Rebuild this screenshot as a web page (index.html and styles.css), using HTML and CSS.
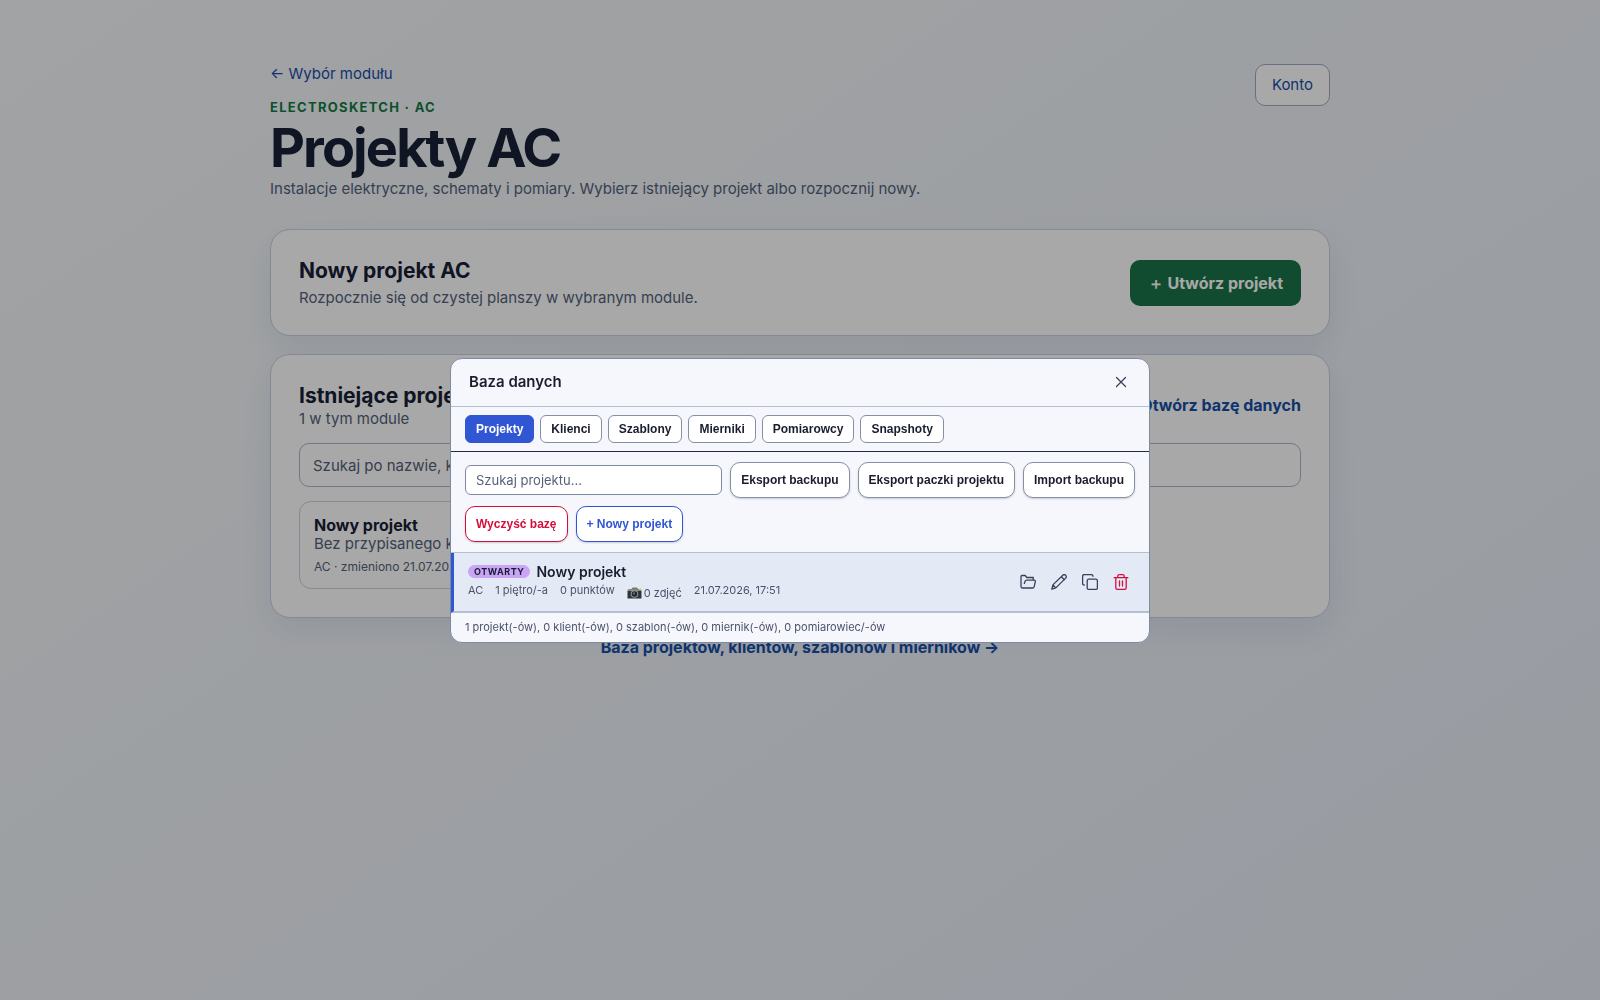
FILE: index.html
```html
<!DOCTYPE html>
<html lang="pl">
<head>
	<meta charset="UTF-8">
	<meta name="viewport" content="width=device-width, initial-scale=1">
	<title>Projekty AC</title>
	<link rel="stylesheet" href="styles.css">
</head>
<body>
<main class="page">
	<header class="page-header">
		<div>
			<a class="back" href="#">← Wybór modułu</a>
			<p class="eyebrow">ELECTROSKETCH · AC</p>
			<h1>Projekty AC</h1>
			<p class="muted">Instalacje elektryczne, schematy i pomiary. Wybierz istniejący projekt albo rozpocznij nowy.</p>
		</div>
		<a class="account" href="#">Konto</a>
	</header>

	<section class="card card-new">
		<div>
			<h2>Nowy projekt AC</h2>
			<p class="muted">Rozpocznie się od czystej planszy w wybranym module.</p>
		</div>
		<button class="create" type="button">＋ Utwórz projekt</button>
	</section>

	<section class="card">
		<div class="card-head">
			<div>
				<h2>Istniejące projekty</h2>
				<p class="muted">1 w tym module</p>
			</div>
			<a class="strong-link" href="#">Otwórz bazę danych</a>
		</div>
		<input class="search" type="search" aria-label="Szukaj projektu" placeholder="Szukaj po nazwie, kliencie lub adresie">
		<a class="project" href="#">
			<strong>Nowy projekt</strong>
			<span>Bez przypisanego klienta</span>
			<small>AC · zmieniono 21.07.2026, 17:51</small>
		</a>
	</section>

	<a class="strong-link base-link" href="#">Baza projektów, klientów, szablonów i mierników →</a>
</main>

<!-- okno bazy danych -->
<div class="overlay">
	<div class="modal" role="dialog" aria-modal="true" aria-labelledby="modal-title">
		<div class="modal-head">
			<h3 id="modal-title">Baza danych</h3>
			<button class="icon-btn" type="button" aria-label="Zamknij">
				<svg width="16" height="16" viewBox="0 0 16 16"><path d="M3.5 3.5l9 9M12.5 3.5l-9 9"/></svg>
			</button>
		</div>
		<nav class="tabs">
			<button class="tab active" type="button">Projekty</button>
			<button class="tab" type="button">Klienci</button>
			<button class="tab" type="button">Szablony</button>
			<button class="tab" type="button">Mierniki</button>
			<button class="tab" type="button">Pomiarowcy</button>
			<button class="tab" type="button">Snapshoty</button>
		</nav>
		<div class="toolbar">
			<input class="filter" type="text" aria-label="Szukaj projektu" placeholder="Szukaj projektu...">
			<button class="btn" type="button">Eksport backupu</button>
			<button class="btn" type="button">Eksport paczki projektu</button>
			<button class="btn" type="button">Import backupu</button>
			<button class="btn danger" type="button">Wyczyść bazę</button>
			<button class="btn primary" type="button">+ Nowy projekt</button>
		</div>
		<div class="row">
			<div class="row-info">
				<div class="row-title"><span class="badge">OTWARTY</span>Nowy projekt</div>
				<div class="row-meta">
					<span>AC</span>
					<span>1 piętro/-a</span>
					<span>0 punktów</span>
					<span class="photos"><svg width="15" height="12" viewBox="0 0 15 12"><path fill="#777b7c" d="M1.500 2h3l1-1.500h4.500l1 1.500h3v9h-13z"/><path fill="#303436" d="M.5 4h14v7.500H.5z"/><path fill="#8b8e86" d="M.5 2.500h14V4H.5z"/><path fill="#e6c75d" d="M12 1.500h2v1.500h-2z"/><circle cx="7.500" cy="7" r="3.800" fill="#939da3"/><circle cx="7.500" cy="7" r="2.800" fill="#202529"/><circle cx="7" cy="6.500" r="1.200" fill="#586c7a"/></svg>0 zdjęć</span>
					<span>21.07.2026, 17:51</span>
				</div>
			</div>
			<div class="actions">
				<button class="icon-btn" type="button" aria-label="Otwórz">
					<svg width="16" height="16" viewBox="0 0 16 16"><path d="M1 12.500v-10C1 1.700 1.500 1.500 2 1.500h3.200l1.600 2H12c.8 0 1.300.5 1.300 1.300v1.400M4.300 9.500l.8-2.200c.3-.8.800-1.100 1.500-1.100h7.600c.8 0 1.300.6 1.100 1.400l-1.100 5c-.2.900-.7 1.400-1.600 1.400H2.500c-.9 0-1.500-.6-1.500-1.500M6.800 3.500h6.500"/></svg>
				</button>
				<button class="icon-btn" type="button" aria-label="Edytuj">
					<svg width="16" height="16" viewBox="0 0 16 16"><path d="M.8 15.200l1.100-4.300L11.800 1.200c1.900-1.700 4.600.9 2.900 2.900l-9.900 9.800zM10.300 2.700l3 3M1.900 10.900l2.900 3"/></svg>
				</button>
				<button class="icon-btn" type="button" aria-label="Duplikuj">
					<svg width="16" height="16" viewBox="0 0 16 16"><rect x="5.200" y="5.200" width="10.200" height="10.200" rx="1.500"/><path d="M2.300 11C1.200 11 .6 10.400.6 9.400V2.200C.6 1.200 1.200.6 2.200.6h7.200c1 0 1.600.6 1.600 1.700"/></svg>
				</button>
				<button class="icon-btn delete" type="button" aria-label="Usuń">
					<svg width="16" height="16" viewBox="0 0 16 16"><path d="M1.200 3.700h13.600M2.800 3.700v10c0 1 .6 1.600 1.600 1.600h7.200c1 0 1.600-.6 1.600-1.600v-10M4.800 3.500V2.200C4.800 1.200 5.300.7 6.300.7h3.400c1 0 1.500.5 1.500 1.500v1.300M6.500 7v5M9.500 7v5"/></svg>
				</button>
			</div>
		</div>
		<div class="modal-foot">1 projekt(-ów), 0 klient(-ów), 0 szablon(-ów), 0 miernik(-ów), 0 pomiarowiec/-ów</div>
	</div>
</div>
</body>
</html>
```
FILE: styles.css
```css
* {
	box-sizing: border-box;
}
body {
	margin: 0;
	min-height: 100vh;
	font-family: Inter, "Liberation Sans", sans-serif;
	font-size: 15px;
	line-height: 19px;
	color: #172036;
	background: linear-gradient(145deg, #f5f7f9, #e7edf6);
}
h1, h2, h3, p {
	margin: 0;
}
a {
	color: #174ea6;
	text-decoration: none;
}
button, input {
	font-family: inherit;
}
svg {
	display: block;
	fill: none;
	stroke: currentColor;
	stroke-width: 1.3;
	stroke-linecap: round;
	stroke-linejoin: round;
}

/* strona projektów */
.page {
	max-width: 1100px;
	margin: 0 auto;
	padding: 64px 20px;
}
.page-header {
	display: flex;
	justify-content: space-between;
	align-items: flex-start;
	margin-bottom: 31px;
}
.back {
	display: block;
}
.eyebrow {
	margin: 16px 0 6px;
	font-size: 13px;
	line-height: 16px;
	font-weight: 700;
	letter-spacing: 0.1em;
	color: #147a45;
}
h1 {
	font-size: 54px;
	line-height: 54px;
	letter-spacing: -0.035em;
	margin-bottom: 4px;
}
.muted {
	color: #52627a;
}
.account {
	padding: 10px 16px;
	line-height: 20px;
	background: #fff;
	border: 1px solid #9cabc4;
	border-radius: 10px;
}
.card {
	padding: 28px;
	margin-bottom: 18px;
	background: #fff;
	border: 1px solid #c7d0e2;
	border-radius: 20px;
	box-shadow: 0 12px 32px rgba(30, 55, 100, 0.08);
}
.card-new,
.card-head {
	display: flex;
	justify-content: space-between;
	align-items: center;
}
h2 {
	font-size: 21px;
	line-height: 26px;
}
.card-new h2 {
	margin-bottom: 4px;
}
.create {
	padding: 13px 18px;
	font-size: 16px;
	line-height: 20px;
	font-weight: 700;
	color: #fff;
	background: #1a7349;
	border: 0;
	border-radius: 10px;
}
.strong-link {
	font-size: 16px;
	font-weight: 700;
}
.search {
	display: block;
	width: 100%;
	height: 44px;
	margin: 15px 0 14px;
	padding: 0 13px;
	font-size: 15px;
	background: #fff;
	border: 1px solid #a9b7cd;
	border-radius: 10px;
}
.search::placeholder,
.filter::placeholder {
	color: #566078;
}
.project {
	display: flex;
	flex-direction: column;
	width: 326px;
	padding: 14px;
	color: #52627a;
	border: 1px solid #c7d0e2;
	border-radius: 12px;
}
.project strong {
	font-size: 16px;
	line-height: 18px;
	color: #172036;
}
.project small {
	margin-top: 6px;
	font-size: 12px;
	line-height: 15px;
}
.base-link {
	display: block;
	padding-top: 2px;
	text-align: center;
}

/* okno */
.overlay {
	position: fixed;
	inset: 0;
	display: flex;
	align-items: center;
	justify-content: center;
	background: rgba(0, 0, 0, 0.34);
}
.modal {
	width: 700px;
	overflow: hidden;
	color: #1a1d2e;
	background: #f6f7fc;
	border: 1px solid #7c8aa3;
	border-radius: 12px;
}
.modal-head {
	display: flex;
	justify-content: space-between;
	align-items: center;
	padding: 9px 14px 9px 18px;
	border-bottom: 1px solid #b4bfd3;
}
h3 {
	font-size: 15px;
	line-height: 20px;
	font-weight: 600;
}
.icon-btn {
	display: grid;
	place-items: center;
	width: 29px;
	height: 29px;
	padding: 0;
	color: #3a4058;
	background: none;
	border: 0;
}
.tabs {
	display: flex;
	gap: 6px;
	padding: 8px 14px;
	border-bottom: 1px solid #252b40;
}
.tab,
.btn {
	padding: 6px 10px;
	font: bold 12px/14px "Liberation Sans", Arial, sans-serif;
	color: #1a1d2e;
	background: #fff;
	border: 1px solid #8490a5;
	border-radius: 6px;
}
.tab.active {
	color: #fff;
	background: #3056d3;
	border-color: #3056d3;
}
.toolbar {
	display: flex;
	flex-wrap: wrap;
	align-items: center;
	gap: 8px;
	padding: 10px 14px;
	border-bottom: 1px solid #b4bfd3;
}
.filter {
	flex: 1;
	min-width: 180px;
	height: 30px;
	padding: 0 10px;
	font-size: 13px;
	background: #fff;
	border: 1px solid #7c8aa3;
	border-radius: 6px;
}
.btn {
	padding: 10px;
	border-radius: 10px;
	box-shadow: 0 1px 2px rgba(20, 30, 60, 0.2);
}
.btn.danger {
	color: #d50f3c;
	border-color: #d50f3c;
}
.btn.primary {
	color: #3056d3;
	border-color: #3056d3;
}
.row {
	display: flex;
	justify-content: space-between;
	align-items: center;
	padding: 10px 14px 9px;
	background: #e3e9f5;
	border-left: 3px solid #3056d3;
	border-bottom: 2px solid #b4bfd3;
}
.row-title {
	display: flex;
	align-items: center;
	gap: 6px;
	font-size: 14px;
	line-height: 18px;
	font-weight: 600;
}
.badge {
	padding: 0 6px;
	font-size: 9px;
	line-height: 13px;
	font-weight: 700;
	letter-spacing: 0.06em;
	background: #caa5f7;
	border-radius: 7px;
}
.row-meta {
	display: flex;
	gap: 12px;
	font-size: 11px;
	line-height: 18px;
	color: #4c526b;
}
.photos {
	display: flex;
	align-items: center;
	gap: 2px;
	padding-top: 3px;
}
.photos svg {
	stroke: none;
}
.actions {
	display: flex;
	gap: 2px;
}
.icon-btn.delete {
	color: #d50f3c;
}
.modal-foot {
	padding: 8px 14px;
	font-size: 11px;
	line-height: 13px;
	color: #4c526b;
}
```
